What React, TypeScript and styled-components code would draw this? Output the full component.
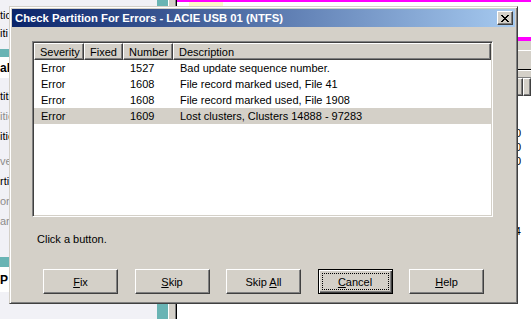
import React from 'react'
import styled, { createGlobalStyle, css } from 'styled-components'

const GlobalStyle = createGlobalStyle`
  html, body {
    margin: 0;
    padding: 0;
    background: #ffffff;
  }
  body {
    font-family: 'Liberation Sans', Arial, sans-serif;
    font-size: 11px;
    color: #000000;
  }
`

const FACE = '#d4d0c8'
const SHADOW = '#808080'
const DARK = '#404040'
const TEAL = '#69b4b4'

const raised = css`
  border: 1px solid;
  border-color: #ffffff ${DARK} ${DARK} #ffffff;
  box-shadow: inset -1px -1px ${SHADOW}, inset 1px 1px ${FACE};
`

const sunken = css`
  border: 1px solid;
  border-color: ${SHADOW} #ffffff #ffffff ${SHADOW};
  box-shadow: inset 1px 1px ${DARK}, inset -1px -1px ${FACE};
`

/* ---------- the application behind the dialog ---------- */

const Desktop = styled.div`
  position: relative;
  width: 531px;
  height: 319px;
  overflow: hidden;
  display: flex;
`

const Sidebar = styled.div`
  width: 157px;
  flex: none;
  background: #f1f1f6;
  display: flex;
  flex-direction: column;
  padding-top: 6px;
  box-sizing: border-box;
`

const SideItem = styled.div<{ $muted?: boolean; $h?: number }>`
  height: ${(p) => p.$h ?? 20}px;
  display: flex;
  align-items: center;
  color: ${(p) => (p.$muted ? '#8c8c8c' : '#000000')};
  white-space: nowrap;
`

const SideHeader = styled.div<{ $h: number }>`
  height: ${(p) => p.$h}px;
  background: ${TEAL};
  flex: none;
`

const SideGroup = styled.div<{ $h: number }>`
  height: ${(p) => p.$h}px;
  background: #ffffff;
  display: flex;
  align-items: center;
  font-weight: bold;
  font-size: 12px;
  flex: none;
`

const Spacer = styled.div<{ $h: number }>`
  height: ${(p) => p.$h}px;
  flex: none;
`

const TealStrip = styled.div`
  width: 11px;
  flex: none;
  background: ${TEAL};
`

const Splitter = styled.div`
  width: 6px;
  flex: none;
  background: ${FACE};
  border-left: 1px solid #ffffff;
  border-right: 1px solid ${SHADOW};
`

const Main = styled.div`
  flex: 1;
  display: flex;
  flex-direction: column;
  background: #ffffff;
  border-left: 1px solid #000000;
`

const MainTop = styled.div`
  height: 35px;
  border-top: 2px solid #ff00ff;
  padding-left: 12px;
`

const NoteTab = styled.div`
  width: 34px;
  height: 4px;
  background: #fdf8c8;
`

const Band = styled.div`
  height: 28px;
  background: ${FACE};
  border-top: 4px solid #ff00ff;
  border-bottom: 1px solid #000000;
  box-shadow: inset 0 9px 0 ${FACE}, inset 0 10px 0 #ffffff;
`

const ToolBottom = styled.div`
  height: 6px;
  background: ${FACE};
  border-top: 1px solid #ffffff;
  border-bottom: 1px solid ${SHADOW};
`

const ColumnHead = styled.div`
  height: 18px;
  display: flex;
  justify-content: flex-end;
  background: ${FACE};
`

const HeadCell = styled.div<{ $w: number }>`
  width: ${(p) => p.$w}px;
  box-sizing: border-box;
  ${raised};
  display: flex;
  align-items: center;
  justify-content: flex-end;
  padding-right: 6px;
`

const Grid = styled.div`
  padding-top: 30px;
  display: flex;
  flex-direction: column;
`

const GridRow = styled.div`
  height: 14px;
  display: flex;
  align-items: center;
  justify-content: flex-end;
  padding-right: 10px;
`

/* ---------- the dialog ---------- */

const Window = styled.div`
  position: absolute;
  left: 9px;
  top: 6px;
  width: 509px;
  height: 298px;
  box-sizing: border-box;
  background: ${FACE};
  border: 1px solid;
  border-color: ${FACE} ${DARK} ${DARK} ${FACE};
  box-shadow: inset 1px 1px #ffffff, inset -1px -1px ${SHADOW};
  padding: 2px;
  display: flex;
  flex-direction: column;
`

const TitleBar = styled.div`
  height: 18px;
  flex: none;
  background: linear-gradient(to right, #0a246a, #a6caf0);
  color: #ffffff;
  font-weight: bold;
  font-size: 11.3px;
  display: flex;
  align-items: center;
  justify-content: space-between;
  padding: 0 2px 0 3px;
`

const CloseButton = styled.div`
  width: 16px;
  height: 14px;
  box-sizing: border-box;
  background: ${FACE};
  ${raised};
  display: flex;
  align-items: center;
  justify-content: center;
`

const Body = styled.div`
  flex: 1;
  display: flex;
  flex-direction: column;
  padding: 14px 0 0 20px;
`

const ListBox = styled.div`
  width: 461px;
  height: 176px;
  box-sizing: border-box;
  background: #ffffff;
  ${sunken};
  padding: 1px;
  display: flex;
  flex-direction: column;
`

const columns = css`
  display: grid;
  grid-template-columns: 50px 39px 50px 1fr;
`

const HeaderRow = styled.div`
  ${columns};
  height: 17px;
  flex: none;
`

const HeaderCell = styled.div`
  background: ${FACE};
  box-sizing: border-box;
  ${raised};
  display: flex;
  align-items: center;
  padding-left: 5px;
  white-space: nowrap;
  overflow: hidden;
`

const Row = styled.div<{ $selected?: boolean }>`
  ${columns};
  height: 16px;
  flex: none;
  align-items: center;
  background: ${(p) => (p.$selected ? FACE : 'transparent')};
`

const Cell = styled.div`
  padding-left: 7px;
  white-space: nowrap;
`

const Status = styled.div`
  margin: 16px 0 0 5px;
  height: 13px;
  line-height: 13px;
`

const ButtonRow = styled.div`
  display: grid;
  grid-template-columns: repeat(5, 75px);
  column-gap: 16.5px;
  margin: 23px 0 0 11px;
`

const PushButton = styled.div<{ $default?: boolean }>`
  height: 25px;
  box-sizing: border-box;
  position: relative;
  display: flex;
  align-items: center;
  justify-content: center;
  background: ${FACE};
  ${(p) =>
    p.$default
      ? css`
          border: 1px solid #000000;
          box-shadow: inset 1px 1px #ffffff, inset -1px -1px ${DARK}, inset -2px -2px ${SHADOW};
        `
      : raised};
`

const FocusRing = styled.div`
  position: absolute;
  inset: 3px;
  border: 1px dotted #000000;
`

const Mnemonic = styled.span`
  text-decoration: underline;
`

const CloseGlyph = () => (
  <svg width="8" height="7" viewBox="0 0 8 7" shapeRendering="crispEdges">
    <path
      fill="#000"
      d="M0 0h2v1H0zM6 0h2v1H6zM1 1h2v1H1zM5 1h2v1H5zM2 2h4v1H2zM3 3h2v1H3zM2 4h4v1H2zM1 5h2v1H1zM5 5h2v1H5zM0 6h2v1H0zM6 6h2v1H6z"
    />
  </svg>
)

const errors = [
  { severity: 'Error', fixed: '', number: '1527', text: 'Bad update sequence number.' },
  { severity: 'Error', fixed: '', number: '1608', text: 'File record marked used, File 41' },
  { severity: 'Error', fixed: '', number: '1608', text: 'File record marked used, File 1908' },
  { severity: 'Error', fixed: '', number: '1609', text: 'Lost clusters, Clusters 14888 - 97283' },
]

const buttons: { key: string; pre: string; hot: string; post: string; isDefault?: boolean }[] = [
  { key: 'fix', pre: '', hot: 'F', post: 'ix' },
  { key: 'skip', pre: '', hot: 'S', post: 'kip' },
  { key: 'skipall', pre: 'Skip ', hot: 'A', post: 'll' },
  { key: 'cancel', pre: '', hot: 'C', post: 'ancel', isDefault: true },
  { key: 'help', pre: '', hot: 'H', post: 'elp' },
]

export default function App() {
  return (
    <Desktop>
      <GlobalStyle />
      <Sidebar>
        <SideItem $h={18}>tic</SideItem>
        <SideItem $h={18}>iti</SideItem>
        <Spacer $h={7} />
        <SideHeader $h={8} />
        <SideGroup $h={21}>al</SideGroup>
        <Spacer $h={8} />
        <SideItem>titi</SideItem>
        <SideItem $muted>itic</SideItem>
        <SideItem>itic</SideItem>
        <Spacer $h={5} />
        <SideItem $muted>ve</SideItem>
        <SideItem>rtil</SideItem>
        <SideItem $muted>on</SideItem>
        <SideItem $muted>ar</SideItem>
        <Spacer $h={26} />
        <SideHeader $h={10} />
        <SideGroup $h={25}>P</SideGroup>
      </Sidebar>
      <TealStrip />
      <Splitter />
      <Main>
        <MainTop>
          <NoteTab />
        </MainTop>
        <Band />
        <ToolBottom />
        <ColumnHead>
          <HeadCell $w={60}>Size</HeadCell>
          <HeadCell $w={6} />
        </ColumnHead>
        <Grid>
          <GridRow>100</GridRow>
          <GridRow>100</GridRow>
          <GridRow>100</GridRow>
          <GridRow />
          <GridRow />
          <GridRow />
          <GridRow />
          <GridRow>24</GridRow>
        </Grid>
      </Main>

      <Window>
        <TitleBar>
          <span>Check Partition For Errors - LACIE USB 01 (NTFS)</span>
          <CloseButton>
            <CloseGlyph />
          </CloseButton>
        </TitleBar>
        <Body>
          <ListBox>
            <HeaderRow>
              <HeaderCell>Severity</HeaderCell>
              <HeaderCell>Fixed</HeaderCell>
              <HeaderCell>Number</HeaderCell>
              <HeaderCell>Description</HeaderCell>
            </HeaderRow>
            {errors.map((e, i) => (
              <Row key={i} $selected={i === errors.length - 1}>
                <Cell>{e.severity}</Cell>
                <Cell>{e.fixed}</Cell>
                <Cell>{e.number}</Cell>
                <Cell>{e.text}</Cell>
              </Row>
            ))}
          </ListBox>
          <Status>Click a button.</Status>
          <ButtonRow>
            {buttons.map((b) => (
              <PushButton key={b.key} $default={b.isDefault}>
                {b.isDefault && <FocusRing />}
                <span>
                  {b.pre}
                  <Mnemonic>{b.hot}</Mnemonic>
                  {b.post}
                </span>
              </PushButton>
            ))}
          </ButtonRow>
        </Body>
      </Window>
    </Desktop>
  )
}
